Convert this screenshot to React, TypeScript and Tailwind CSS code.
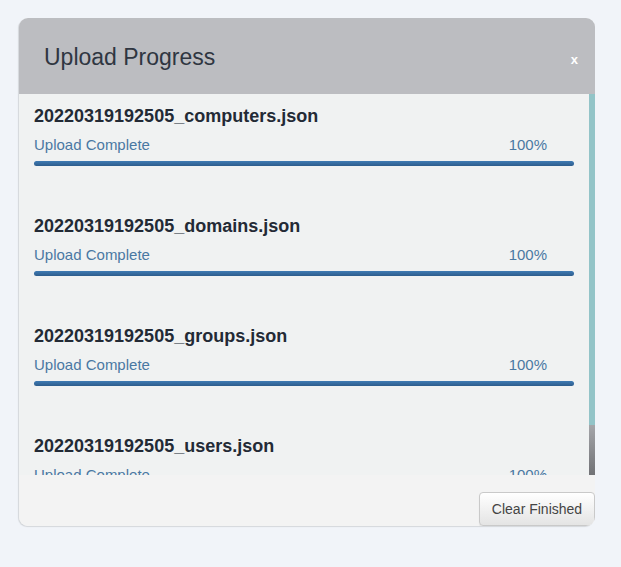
const FILES = [
  "20220319192505_computers.json",
  "20220319192505_domains.json",
  "20220319192505_groups.json",
  "20220319192505_users.json",
];

function UploadItem({ name }: { name: string }) {
  return (
    <div className="pb-[49px]">
      <div className="h-[22px] text-[18px] leading-[22px] font-bold text-[#232a35]">
        {name}
      </div>
      <div className="mt-[8px] flex h-[20px] items-center justify-between pr-[27px] text-[15px] leading-[20px] text-[#4a78a2]">
        <span>Upload Complete</span>
        <span>100%</span>
      </div>
      <div className="mt-[6px] h-[5px] w-full rounded-[3px] bg-gradient-to-b from-[#3f7bb4] to-[#2d5d8c]" />
    </div>
  );
}

export default function App() {
  return (
    <div
      className="min-h-[567px] bg-[#f1f4f9] pl-[19px] pt-[18px]"
      style={{ fontFamily: '"Liberation Sans", Arial, sans-serif' }}
    >
      <div className="flex h-[508px] w-[576px] flex-col overflow-hidden rounded-[9px] bg-[#f2f3f3] shadow-[-1px_1px_1px_rgba(0,0,0,0.12)]">
        {/* Header */}
        <div className="flex h-[76px] shrink-0 items-center justify-between bg-[#bcbdc1] pl-[25px] pr-[17px]">
          <h2 className="mt-[2px] text-[23px] leading-none text-[#2f3641]">
            Upload Progress
          </h2>
          <button className="mt-[6px] text-[13px] font-bold leading-none text-white">
            x
          </button>
        </div>

        {/* Scroll area */}
        <div className="flex h-[381px] shrink-0">
          <div className="flex-1 overflow-hidden bg-[#f0f2f2] pl-[15px] pr-[15px] pt-[11px]">
            {FILES.map((f) => (
              <UploadItem key={f} name={f} />
            ))}
          </div>
          <div className="flex w-[6px] flex-col">
            <div className="h-[331px] bg-[#93c4c8]" />
            <div className="flex-1 bg-gradient-to-b from-[#a5a6aa] to-[#717276]" />
          </div>
        </div>

        {/* Footer */}
        <div className="flex flex-1 items-start justify-end bg-[#f3f3f3] pt-[17px]">
          <button className="h-[34px] w-[116px] rounded-[4px] border border-[#c9c9c9] bg-gradient-to-b from-white to-[#e4e4e4] text-[14px] text-[#444] shadow-[0_1px_1px_rgba(0,0,0,0.08)]">
            Clear Finished
          </button>
        </div>
      </div>
    </div>
  );
}
